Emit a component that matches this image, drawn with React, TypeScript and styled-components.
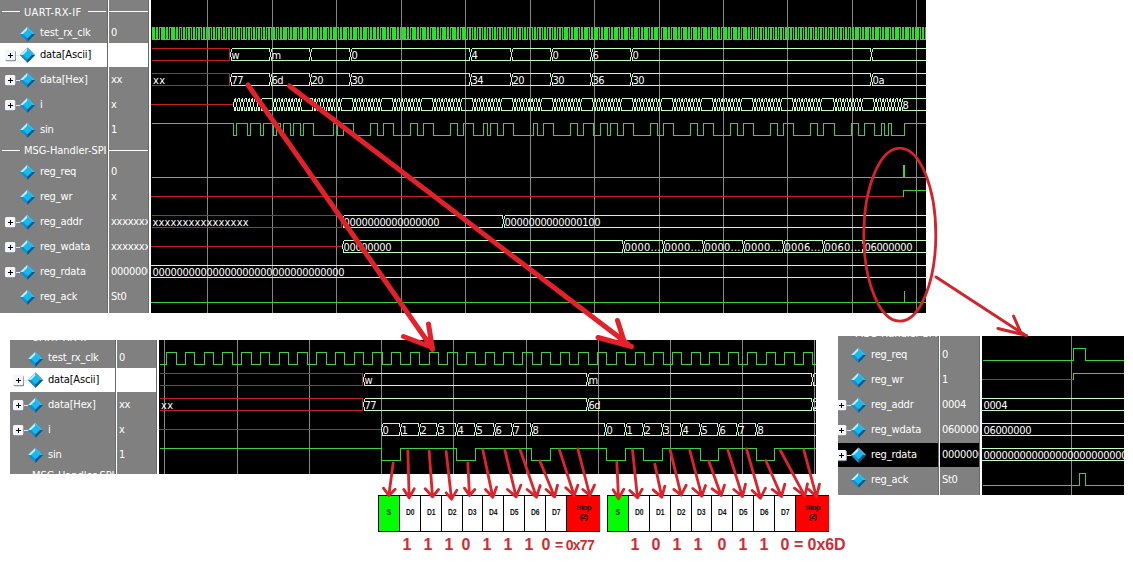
import React from 'react';
import styled, { createGlobalStyle } from 'styled-components';

const GREEN = '#3ed03e';
const PALE = '#c0ffc0';
const RED = '#c42222';
const MARK = '#e4202a';
const FONT = '"DejaVu Sans Condensed", "DejaVu Sans", sans-serif';

const GlobalStyle = createGlobalStyle`
  body { margin: 0; background: #fff; }
`;

const Page = styled.main`
  position: relative;
  width: 1133px;
  height: 563px;
  overflow: hidden;
  background: #fff;
  font-family: ${FONT};
  font-stretch: condensed;
  font-size: 11px;
`;

const Panel = styled.section<{ $w: number; $h: number; $mt?: number; $ml?: number }>`
  width: ${p => p.$w}px;
  height: ${p => p.$h}px;
  margin-top: ${p => p.$mt ?? 0}px;
  margin-left: ${p => p.$ml ?? 0}px;
  display: flex;
  align-items: flex-start;
  overflow: hidden;
  flex-shrink: 0;
`;

const Column = styled.div<{ $w: number; $shiftX?: number; $shiftY: number; $gap: number }>`
  box-sizing: border-box;
  flex: none;
  width: ${p => p.$w}px;
  height: 330px;
  margin-top: ${p => -p.$shiftY}px;
  margin-left: ${p => -(p.$shiftX ?? 0)}px;
  background: #808080;
  border-right: 1px solid #6a6a6a;
  box-shadow: ${p => p.$gap}px 0 0 #fff;
  margin-right: ${p => p.$gap}px;
  overflow: hidden;
`;

const Row = styled.div<{ $h: number; $tone?: string }>`
  box-sizing: border-box;
  height: ${p => p.$h}px;
  border-top: 1px solid #808080;
  display: flex;
  align-items: center;
  white-space: nowrap;
  color: ${p => (p.$tone === 'light' ? '#000' : '#fff')};
  background: ${p => (p.$tone === 'light' ? '#fff' : p.$tone === 'dark' ? '#000' : '#808080')};
`;

const Rule = styled.i<{ $w: number; $ml?: number }>`
  flex: none;
  width: ${p => p.$w}px;
  height: 1px;
  margin: 0 0 2px ${p => p.$ml ?? 0}px;
  background: #fff;
`;

const Caption = styled.span<{ $w: number }>`
  flex: none;
  width: ${p => p.$w}px;
  margin-left: 4px;
  padding-bottom: 1px;
  letter-spacing: ${p => (p.$w > 70 ? -0.04 : 0.35)}px;
`;

const Label = styled.span`
  margin-left: 4px;
  padding-bottom: 2px;
  letter-spacing: -0.16px;
`;

const Value = styled.span`
  width: 37px;
  overflow: hidden;
  margin-left: 2px;
  padding-bottom: 2px;
  letter-spacing: -0.29px;
`;

const Glyph = styled.svg`
  flex: none;
  display: block;
  margin-left: 5px;
`;

const Scope = styled.svg`
  display: block;
  flex: none;
  background: #000;
`;

const Lower = styled.div`
  display: flex;
  align-items: flex-start;
`;

const Detail = styled.div`
  width: 806px;
  margin: 27px 22px 0 10px;
`;

const Frames = styled.div`
  display: flex;
  gap: 7px;
  margin: 21px 0 0 368px;
`;

const Frame = styled.div`
  display: flex;
  width: 222px;
  height: 37px;
`;

const Slot = styled.div<{ $w: number; $bg: string }>`
  box-sizing: border-box;
  flex: none;
  width: ${p => p.$w}px;
  display: flex;
  align-items: center;
  justify-content: center;
  text-align: center;
  border: 1px solid #000;
  border-right-width: 0;
  background: ${p => p.$bg};
  font: bold 8.500px/9px "Liberation Sans", sans-serif;
  color: #111;
  padding-bottom: 3px;
`;

const SlotText = styled.span`
  letter-spacing: -0.3px;
  transform: scaleX(0.8);
`;

const StopText = styled.span`
  font-size: 8px;
  letter-spacing: -0.7px;
`;

const Bits = styled.div`
  display: flex;
  height: 20px;
  margin: 3px 0 0 368px;
  font: bold 16px/20px "Liberation Sans", sans-serif;
  color: #d42a30;
`;

const Bit = styled.span<{ $ml: number }>`
  flex: none;
  width: 10px;
  margin-left: ${p => p.$ml}px;
  text-align: center;
`;

const Result = styled.span<{ $ml: number; $small?: boolean }>`
  flex: none;
  margin-left: ${p => p.$ml}px;
  white-space: nowrap;
  font-size: ${p => (p.$small ? 14 : 16)}px;
  width: ${p => (p.$small ? 44 : 54)}px;
  letter-spacing: ${p => (p.$small ? -0.7 : -0.1)}px;
`;

const Overlay = styled.svg`
  position: absolute;
  inset: 0;
  pointer-events: none;
`;

type Signal = { name: string; value?: string; kind?: 'group'; bus?: boolean; tone?: string; h?: number };

const uart = (first: number): Signal[] => [
  { name: 'UART-RX-IF', kind: 'group', h: first },
  { name: 'test_rx_clk', value: '0', h: 18 },
  { name: 'data[Ascii]', value: '', bus: true, tone: 'light' },
  { name: 'data[Hex]', value: 'xx', bus: true },
  { name: 'i', value: 'x', bus: true },
  { name: 'sin', value: '1' },
  { name: 'MSG-Handler-SPI', kind: 'group', h: 17 },
];

const spi = (v: string[], selected?: string): Signal[] =>
  ['reg_req', 'reg_wr', 'reg_addr', 'reg_wdata', 'reg_rdata', 'reg_ack'].map((name, n) => ({
    name,
    value: v[n],
    bus: n >= 2 && n <= 4,
    tone: name === selected ? 'dark' : undefined,
  }));

const SignalGlyph = ({ bus }: { bus?: boolean }) => (
  <Glyph width="31" height="18" viewBox="0 0 31 18">
    {bus && (
      <g>
        <path d="M10 9.500H17" stroke="#e8e8e8" shapeRendering="crispEdges" />
        <rect x="0.500" y="4.700" width="10.500" height="10.500" rx="1.500" fill="#6f7a90" />
        <rect x="0" y="4" width="10.300" height="10.300" rx="1.500" fill="#f4f5fa" />
        <path d="M3 9.500H8M5.500 7V12" stroke="#000" shapeRendering="crispEdges" />
      </g>
    )}
    <path d="M22.500 1.500L30 9L22.500 16.800L15 9Z" fill="#1685bd" />
    <path d="M22.500 1.500V5L18.300 9H15Z" fill="#b8f0fa" />
    <path d="M22.500 1.500L30 9H26.700L22.500 5Z" fill="#43b4dc" />
    <path d="M15 9H18.300L22.500 13.200V16.800Z" fill="#1c8cc8" />
    <path d="M30 9H26.700L22.500 13.200V16.800Z" fill="#0c5488" />
    <path d="M22.500 4.700L26.900 9L22.500 13.300L18.100 9Z" fill="#10bdf2" />
  </Glyph>
);

function SignalTable({ rows, shiftX = 0, shiftY = 0 }: { rows: Signal[]; shiftX?: number; shiftY?: number }) {
  return (
    <>
      <Column $w={108} $gap={1} $shiftX={shiftX} $shiftY={shiftY}>
        {rows.map(r => (
          <Row key={r.name} $h={r.h ?? 25} $tone={r.tone}>
            {r.kind ? (
              <>
                <Rule $w={18} $ml={2} />
                <Caption $w={r.name.length > 12 ? 84 : 60}>{r.name}</Caption>
                <Rule $w={18} $ml={4} />
              </>
            ) : (
              <>
                <SignalGlyph bus={r.bus} />
                <Label>{r.name}</Label>
              </>
            )}
          </Row>
        ))}
      </Column>
      <Column $w={40} $gap={2} $shiftY={shiftY}>
        {rows.map(r => (
          <Row key={r.name} $h={r.h ?? 25} $tone={r.tone}>
            {r.kind ? <Rule $w={39} /> : <Value>{r.value}</Value>}
          </Row>
        ))}
      </Column>
    </>
  );
}

/* Waveform primitives; x positions are pixels, y is the high level of the lane. */
const LANE = 12;
type Seg = [number, string?];

function Text({ x, y, s }: { x: number; y: number; s: string }) {
  const w = s.endsWith('...') ? 36 : s.length * 6;
  return s.length > 1 ? (
    <text x={x} y={y + 11} textLength={w} lengthAdjust="spacing">{s}</text>
  ) : (
    <text x={x} y={y + 11}>{s}</text>
  );
}

function Bus({ y, segs, end, open, color = PALE }: { y: number; segs: Seg[]; end: number; open?: boolean; color?: string }) {
  const b = y + LANE;
  let d = '';
  segs.forEach(([x], n) => {
    const stop = n + 1 < segs.length ? segs[n + 1][0] - 1 : end;
    const from = open && n === 0 ? x : x + 1;
    d += `M${from} ${y}H${stop}M${from} ${b}H${stop}`;
    if (!(open && n === 0)) {
      d += `M${x + 1} ${y}v3l-1 1v4l1 1v3`;
      if (n > 0) d += `M${x - 1} ${y}v3l1 1M${x} ${y + 8}l-1 1v3`;
    }
  });
  return (
    <>
      <path d={d} stroke={color} transform="translate(.5 .5)" fill="none" />
      {segs.map(([x, s]) => s && <Text key={x} x={x + (open ? 2 : 1.5)} y={y} s={s} />)}
    </>
  );
}

function Unknown({ y, from, to }: { y: number; from: number; to: number }) {
  return <path d={`M${from} ${y}H${to - 1}v${LANE}H${from}`} stroke={RED} transform="translate(.5 .5)" />;
}

function Level({ y, from, toggles, end, high }: { y: number; from: number; toggles: number[]; end: number; high?: boolean }) {
  let up = !!high;
  let d = `M${from} ${up ? y : y + LANE}`;
  toggles.forEach(t => {
    up = !up;
    d += `H${Math.round(t)}V${up ? y : y + LANE}`;
  });
  return <path d={d + `H${end}`} stroke={GREEN} transform="translate(.5 .5)" />;
}

function Grid({ xs, y, h }: { xs: number[]; y: number; h: number }) {
  return <path d={xs.map(x => `M${x + 0.5} ${y}v${h}`).join('')} stroke="#868686" />;
}

const BYTES = [0x77, 0x6d, 0x20, 0x30, 0x30, 0x30, 0x34, 0x20, 0x30, 0x36, 0x30, 0x30, 0x30, 0x30, 0x30, 0x30, 0x0a];
const STARTS = [233, 273, 313, 353, 393, 433, 473, 513, 553, 593, 633, 673, 713, 753, 793, 834, 874];

function serialToggles() {
  const out: number[] = [];
  let last = 1;
  BYTES.forEach((byte, n) => {
    for (let k = 0; k < 10; k++) {
      const bit = k === 0 ? 0 : k === 9 ? 1 : (byte >> (k - 1)) & 1;
      if (bit !== last) out.push(STARTS[n] + k * 3.38);
      last = bit;
    }
  });
  return out;
}

function clock(from: number, period: number, end: number) {
  const out: number[] = [];
  for (let t = from; t < end; t += period / 2) out.push(t);
  return out;
}

const counts: Seg[] = STARTS.flatMap(s => Array.from({ length: 9 }, (_, k): Seg => [Math.round(s + k * 3.38)]));
counts[counts.length - 1][1] = '8';

const scopeText = { fill: '#fff', fontFamily: FONT, fontSize: 11, shapeRendering: 'crispEdges' as const };

const Overview = () => (
  <Scope width="775" height="313" viewBox="151 0 775 313" fill="none" shapeRendering="crispEdges">
    <Grid xs={[207, 272, 336, 401, 465, 530, 594, 659, 723, 787, 852, 916]} y={0} h={313} />
    <Level y={27} from={151} toggles={clock(152.4, 3.345, 926)} end={926} />
    <path
      d={Array.from({ length: 78 }, (_, n) => `M${Math.round(154 + n * 10.035)} 27v13`).join('')}
      stroke="#00ff00"
      strokeWidth="2"
    />
    <Unknown y={48} from={151} to={230} />
    <Unknown y={73} from={151} to={230} />
    <Unknown y={215} from={151} to={342} />
    <path d="M151 104.500H233M151 196.500H903M151 246.500H342" stroke={RED} />
    <g {...scopeText}>
      <Bus y={48} end={926} segs={[[230, 'w'], [270, 'm'], [310], [350, '0'], [470, '4'], [511], [551, '0'], [591, '6'], [631, '0'], [871]]} />
      <Bus y={73} end={926} segs={[[230, '77'], [270, '6d'], [310, '20'], [350, '30'], [470, '34'], [511, '20'], [551, '30'], [591, '36'], [631, '30'], [871, '0a']]} />
      <Text x={153} y={73} s="xx" />
      <Bus y={98} end={926} segs={counts} />
      <Text x={152.5} y={215} s="xxxxxxxxxxxxxxxx" />
      <Bus y={215} end={926} segs={[[342, '0000000000000000'], [503, '0000000000000100']]} />
      <Bus y={240} end={926} segs={[[342, '00000000'], [623, '0000...'], [663, '0000...'], [703, '0000...'], [743, '0000...'], [783, '0006...'], [823, '0060...'], [863, '06000000']]} />
      <Bus y={265} end={926} open segs={[[150.5, '00000000000000000000000000000000']]} />
    </g>
    <Level y={123} from={151} high toggles={serialToggles()} end={926} />
    <Level y={165} from={151} toggles={[903, 904]} end={926} />
    <path d="M903.500 197V190.500H926M904.500 291V302M151 302.500H926" stroke={GREEN} />
  </Scope>
);

const numbered = (xs: number[]): Seg[] => xs.map((x, n) => [x, String(n % 9)]);

const ByteDetail = () => (
  <Scope width="657" height="134" viewBox="159 340 657 134" fill="none" shapeRendering="crispEdges">
    <Grid xs={[164, 237, 309, 381, 453, 526, 598, 670, 742, 814]} y={340} h={134} />
    <Level y={352} from={159} toggles={clock(166.3, 18.73, 816)} end={816} />
    <Unknown y={373} from={159} to={363} />
    <Unknown y={398} from={159} to={363} />
    <path d="M159 429.500H381" stroke={RED} />
    <g {...scopeText}>
      <Text x={161} y={398} s="xx" />
      <Bus y={373} end={816} segs={[[363, 'w'], [587, 'm'], [812]]} />
      <Bus y={398} end={816} segs={[[363, '77'], [587, '6d'], [812, '2']]} />
      <Bus y={423} end={816} segs={numbered([381, 400, 419, 437, 456, 475, 494, 512, 531, 605, 625, 643, 662, 681, 700, 718, 737, 756])} />
    </g>
    <Level y={448} from={159} high toggles={[381, 400, 456, 475, 531, 550, 606, 625, 643, 662, 700, 718, 756, 774]} end={816} />
  </Scope>
);

const BusDetail = () => (
  <Scope width="142" height="159" viewBox="982 336 142 159" fill="none" shapeRendering="crispEdges">
    <Grid xs={[1071]} y={336} h={159} />
    <Level y={348} from={982} toggles={[1073, 1085]} end={1124} />
    <path d="M982 379.500H1073" stroke={RED} />
    <path d="M1073.500 380V373.500H1124" stroke={GREEN} />
    <g {...scopeText}>
      <Bus y={398} end={1124} open segs={[[981.5, '0004']]} />
      <Bus y={423} end={1124} open segs={[[981.5, '06000000']]} />
      <Bus y={448} end={1124} open segs={[[981.5, '000000000000000000000000']]} />
    </g>
    <Level y={473} from={982} toggles={[1079, 1085]} end={1124} />
  </Scope>
);

const SLOT_WIDTHS = [21, 21, 21, 21, 20, 21, 21, 21, 21];

const SerialFrame = () => (
  <Frame>
    {['S', 'D0', 'D1', 'D2', 'D3', 'D4', 'D5', 'D6', 'D7'].map((s, n) => (
      <Slot key={s} $w={SLOT_WIDTHS[n]} $bg={n ? '#fff' : '#00ff00'}>
        <SlotText>{s}</SlotText>
      </Slot>
    ))}
    <Slot $w={34} $bg="#ff0000">
      <StopText>Stop<br />(2)</StopText>
    </Slot>
  </Frame>
);

/* Each arrow: shaft start, tip, and the two barb ends. */
type Arrow = number[];
const LEFT: Arrow[] = [
  [98, 383, 85, 480, 69, 458, 104, 461],
  [142, 346, 146, 487, 130, 462, 161, 460],
  [206, 346, 216, 484, 194, 460, 234, 462],
  [257, 348, 273, 491, 257, 472, 289, 464],
  [322, 383, 327, 480, 312, 458, 343, 462],
  [367, 343, 397, 485, 375, 462, 408, 455],
  [433, 343, 467, 484, 441, 462, 481, 449],
  [479, 343, 528, 485, 500, 462, 539, 450],
  [538, 376, 582, 484, 557, 462, 591, 449],
  [597, 343, 641, 480, 616, 457, 652, 449],
  [652, 340, 688, 480, 667, 462, 702, 449],
];
const RIGHT: Arrow[] = [
  [79, 379, 84, 490, 68, 463, 100, 461],
  [126, 343, 141, 487, 118, 465, 155, 461],
  [193, 386, 214, 485, 188, 463, 223, 452],
  [239, 343, 272, 479, 250, 462, 287, 449],
  [298, 345, 334, 482, 307, 459, 345, 450],
  [355, 377, 392, 480, 365, 460, 402, 449],
  [412, 343, 456, 483, 430, 462, 465, 446],
  [468, 340, 510, 488, 485, 465, 525, 458],
  [526, 375, 573, 483, 545, 462, 583, 446],
  [570, 345, 643, 482, 612, 458, 651, 445],
  [640, 343, 678, 484, 655, 462, 687, 446],
];

const arrowPath = ([x1, y1, x2, y2, ax, ay, bx, by]: Arrow) =>
  `M${x1} ${y1}L${x2} ${y2}M${ax} ${ay}L${x2} ${y2}L${bx} ${by}`;

const Annotations = () => (
  <Overlay width="1133" height="563" fill="none" stroke={MARK} strokeLinecap="round" strokeLinejoin="round">
    <path d="M248 85L430 345M403.500 336.500L432.500 347.500M428.500 324L432.500 349.500" strokeWidth="5" />
    <path d="M289.500 86L628 344M598 337.500L631.500 346.500M617.500 320.500L625 344" strokeWidth="5" />
    <g stroke="#d2242a">
      <ellipse cx="899.800" cy="234.700" rx="36" ry="86.500" strokeWidth="2.800" />
      <path d="M936 277L1025 335M998 328.500L1026.500 335.500M1013.500 316L1021 333" strokeWidth="3" />
    </g>
    <g strokeWidth="8.500" stroke="#dc242c">
      <path transform="translate(360.500 335.500) scale(.3333)" d={LEFT.map(arrowPath).join('')} />
      <path transform="translate(590.500 335.500) scale(.3333)" d={RIGHT.map(arrowPath).join('')} />
    </g>
  </Overlay>
);

const BIT_CENTRES_A = [407, 428, 449, 466, 487, 508, 529, 546];
const BIT_CENTRES_B = [635, 656, 677, 698, 722, 743, 764, 785];

const bitRow = (bits: string, centres: number[], from: number) =>
  bits.split('').map((b, n) => (
    <Bit key={`${from}-${n}`} $ml={centres[n] - 5 - (n ? centres[n - 1] + 5 : from)}>{b}</Bit>
  ));

export default function App() {
  return (
    <Page>
      <GlobalStyle />
      <Panel $w={926} $h={313}>
        <SignalTable rows={[...uart(24), ...spi(['0', 'x', 'xxxxxxx', 'xxxxxxx', '0000000', 'St0'])]} />
        <Overview />
      </Panel>
      <Lower>
        <Detail>
          <Panel $w={806} $h={134}>
            <SignalTable rows={uart(24)} shiftX={2} shiftY={15} />
            <ByteDetail />
          </Panel>
          <Frames>
            <SerialFrame />
            <SerialFrame />
          </Frames>
          <Bits>
            {bitRow('11101110', BIT_CENTRES_A, 378)}
            <Result $ml={4} $small>= 0x77</Result>
            {bitRow('10110110', BIT_CENTRES_B, 599)}
            <Result $ml={4}>= 0x6D</Result>
          </Bits>
        </Detail>
        <Panel $w={286} $h={159} $mt={23}>
          <SignalTable
            rows={[{ name: 'MSG-Handler-SPI', kind: 'group', h: 17 }, ...spi(['0', '1', '0004', '0600000', '0000000', 'St0'], 'reg_rdata')]}
            shiftX={7}
            shiftY={11}
          />
          <BusDetail />
        </Panel>
      </Lower>
      <Annotations />
    </Page>
  );
}
